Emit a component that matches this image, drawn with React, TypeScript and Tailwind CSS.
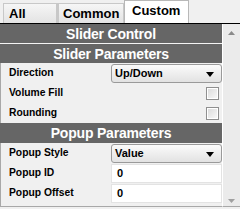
import React from "react";

const Header = ({ children, h }: { children: React.ReactNode; h: string }) => (
  <div className={`${h} bg-[#666666] flex items-center justify-center text-white font-bold text-[14px] tracking-[-0.2px] leading-none`}>
    {children}
  </div>
);

const Arrow = () => (
  <svg width="8" height="5" viewBox="0 0 8 5" className="absolute right-[7px] top-[7px]">
    <path d="M0 0H8L4 5Z" fill="#000" />
  </svg>
);

const Select = ({ value }: { value: string }) => (
  <div className="relative ml-auto w-[111px] h-[19px] border border-[#9a9a9a] rounded-[3px] bg-gradient-to-b from-[#fbfbfb] to-[#e2e2e2] flex items-center pl-[3px] text-[11px] font-bold text-black">
    {value}
    <Arrow />
  </div>
);

const Check = () => (
  <div className="ml-auto mr-[3px] w-[13px] h-[13px] border border-[#8f8f8f] p-[1px] bg-white">
    <div className="w-full h-full bg-gradient-to-br from-[#dcdcdc] to-[#f8f8f8]" />
  </div>
);

const Input = ({ value }: { value: string }) => (
  <div className="ml-auto w-[111px] h-[19px] bg-white border border-[#e3e3e3] flex items-center pl-[5px] text-[11px] font-bold text-black">
    {value}
  </div>
);

const Row = ({ label, children }: { label: string; children: React.ReactNode }) => (
  <div className="h-[20px] flex items-center pl-[8px] pr-0 text-[10.3px] font-bold text-black">
    <span>{label}</span>
    {children}
  </div>
);

export default function App() {
  return (
    <div
      className="w-[240px] h-[209px] bg-[#f0f0f0] overflow-hidden relative"
      style={{ fontFamily: '"Liberation Sans", Arial, sans-serif' }}
    >
      {/* tabs */}
      <div className="h-[24px] flex items-end pl-[3px] border-b border-black">
        <div className="w-[54px] h-[20px] border-l border-t border-r border-[#c8c8c8] bg-gradient-to-b from-[#f6f6f6] to-[#e3e3e3] text-[13px] font-bold text-black pl-[5px] flex items-center">
          All
        </div>
        <div className="w-[67px] h-[20px] border-l-2 border-t border-r border-[#c8c8c8] bg-gradient-to-b from-[#f6f6f6] to-[#e3e3e3] text-[13px] font-bold text-black pl-[4px] flex items-center">
          Common
        </div>
        <div className="w-[65px] h-[23px] border-l border-t border-r border-[#b8b8b8] bg-white text-[13px] font-bold text-black pl-[7px] flex items-center pb-[2px]">
          Custom
        </div>
      </div>
      {/* body */}
      <div className="flex h-[183px]">
        <div className="w-[222px] flex flex-col">
          <Header h="h-[19px]">Slider Control</Header>
          <div className="h-[1px] bg-[#f4f4f4]" />
          <Header h="h-[19px]">Slider Parameters</Header>
          <div className="border-l border-[#a8a8a8]">
            <Row label="Direction">
              <Select value="Up/Down" />
            </Row>
            <Row label="Volume Fill">
              <Check />
            </Row>
            <Row label="Rounding">
              <Check />
            </Row>
          </div>
          <Header h="h-[20px]">Popup Parameters</Header>
          <div className="border-l border-b border-[#a8a8a8] pb-[3px]">
            <Row label="Popup Style">
              <Select value="Value" />
            </Row>
            <Row label="Popup ID">
              <Input value="0" />
            </Row>
            <Row label="Popup Offset">
              <Input value="0" />
            </Row>
          </div>
        </div>
        {/* scrollbar */}
        <div className="w-[18px] h-[183px] border-l border-white bg-[#ebebeb] border-b border-b-[#a8a8a8] relative flex flex-col items-center justify-between pt-[7px] pb-[3px]">
          <svg width="7" height="4" viewBox="0 0 7 4">
            <path d="M3.5 0L7 4H0Z" fill="#8a8a8a" />
          </svg>
          <svg width="7" height="4" viewBox="0 0 7 4">
            <path d="M0 0H7L3.5 4Z" fill="#a0a0a0" />
          </svg>
        </div>
      </div>
    </div>
  );
}
